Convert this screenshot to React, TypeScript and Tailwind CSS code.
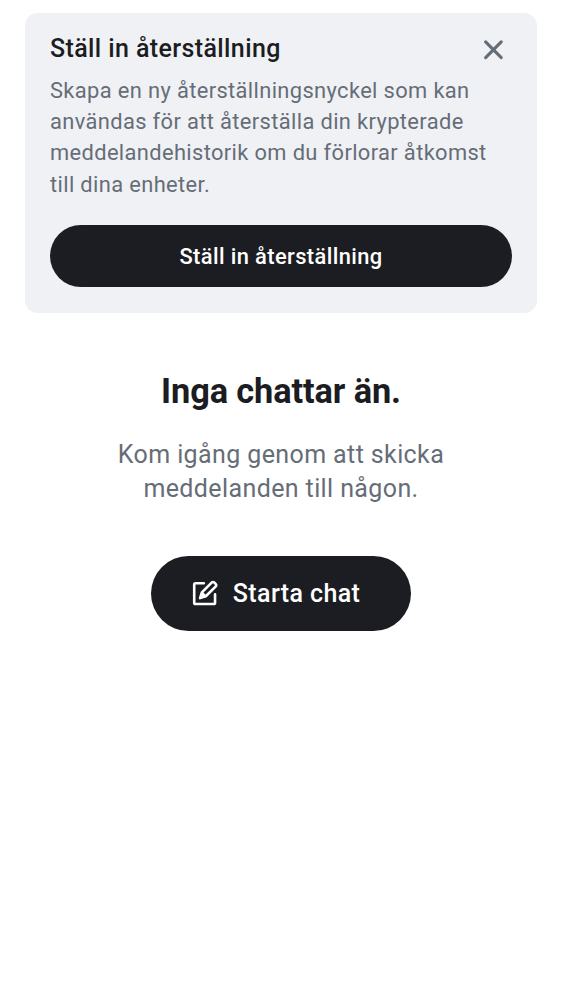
export default function App() {
  return (
    <main className="flex h-[1000px] w-[562px] flex-col items-center bg-white pt-[12.5px] font-[Roboto,sans-serif] text-[#1b1d22]">
      <section className="flex h-[300px] w-[512px] flex-col rounded-[12.5px] bg-[#f0f1f5] px-[25px] pt-[19px]">
        <div className="flex h-[34px] items-start justify-between">
          <h2 className="text-[25px] leading-[34px] font-medium tracking-[0.39px]">Ställ in återställning</h2>
          <button aria-label="Stäng" className="-mt-[0.25px] text-[#656d77]">
            <svg width="37.5" height="37.5" viewBox="0 0 24 24" fill="currentColor">
              <path transform="translate(-0.2 0)" d="M6.293 6.293a1 1 0 0 1 1.414 0L12 10.586l4.293-4.293a1 1 0 1 1 1.414 1.414L13.414 12l4.293 4.293a1 1 0 0 1-1.414 1.414L12 13.414l-4.293 4.293a1 1 0 0 1-1.414-1.414L10.586 12 6.293 7.707a1 1 0 0 1 0-1.414" />
            </svg>
          </button>
        </div>
        <p className="mt-[9.4px] text-[21.875px] leading-[31.25px] tracking-[0.37px] whitespace-nowrap text-[#656d77]">
          Skapa en ny återställningsnyckel som kan<br />användas för att återställa din krypterade<br />meddelandehistorik om du förlorar åtkomst<br />till dina enheter.
        </p>
        <button className="mt-[25.1px] h-[62.5px] w-full shrink-0 rounded-full bg-[#1b1d22] pt-[2px] text-[21.875px] font-medium tracking-[0.4px] text-white">Ställ in återställning</button>
      </section>
      <h1 className="mt-[56px] text-[34.375px] leading-[44px] font-bold tracking-[-0.12px]">Inga chattar än.</h1>
      <p className="mt-[25px] text-center text-[25px] leading-[34.4px] tracking-[0.39px] text-[#656d77]">Kom igång genom att skicka<br />meddelanden till någon.</p>
      <button className="mt-[49.5px] flex h-[75px] w-[260px] items-center gap-[13px] rounded-full bg-[#1b1d22] pl-[37.6px] text-[25px] font-medium tracking-[0.39px] text-white">
        <svg width="31.25" height="31.25" viewBox="0 0 24 24" fill="none" stroke="currentColor" strokeWidth="2" strokeLinecap="round" strokeLinejoin="round">
          <path d="M11.4 4H5a1 1 0 0 0-1 1v14a1 1 0 0 0 1 1h14a1 1 0 0 0 1-1v-6.4" />
          <path d="M17.6 3.4a1.2 1.2 0 0 1 1.7 0l1.3 1.3a1.2 1.2 0 0 1 0 1.7L12.9 14 8.5 15.4l1.4-4.3z" />
          <path d="m10.2 11 2.8 2.8-4.5 1.6z" fill="currentColor" strokeWidth="1" />
        </svg>
        <span>Starta chat</span>
      </button>
    </main>
  );
}
